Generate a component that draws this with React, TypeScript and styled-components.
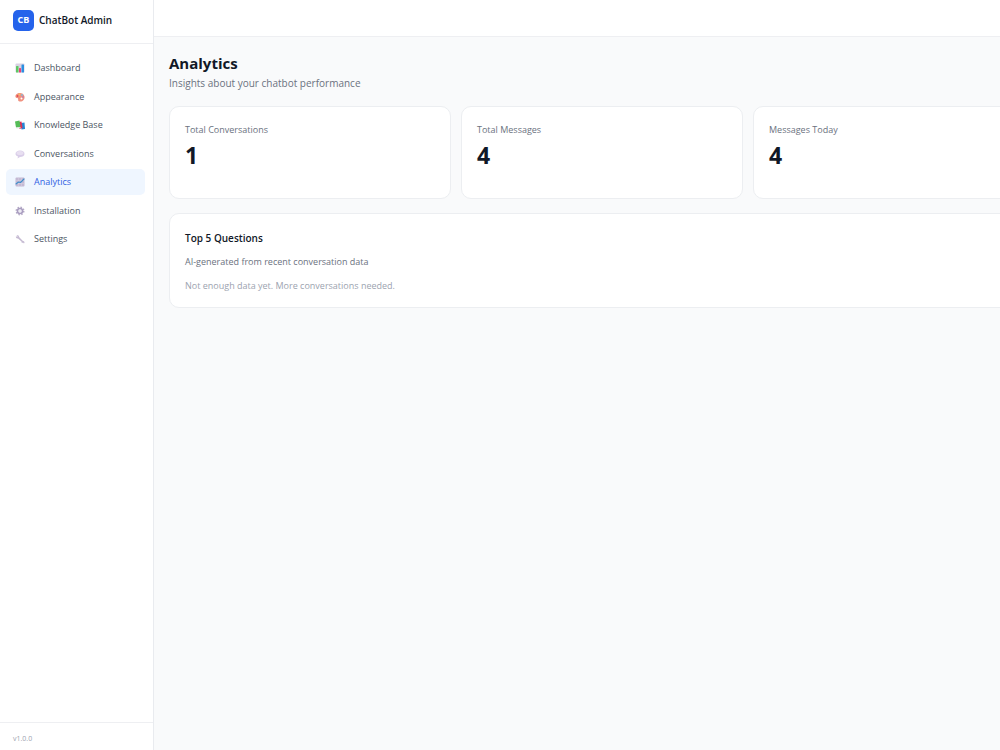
import React from "react";
import styled, { createGlobalStyle } from "styled-components";

const GlobalStyle = createGlobalStyle`
  *, *::before, *::after { box-sizing: border-box; }
  body {
    margin: 0;
    background: #f9fafb;
    color: #111827;
    font-family: "Segoe UI", "Open Sans", "Noto Sans", sans-serif;
    font-size: 9px;
    line-height: 14px;
  }
  h1, h2, p, ul, dl, dd { margin: 0; padding: 0; }
`;

const Shell = styled.div`
  display: flex;
  min-height: 100vh;
  overflow: hidden;
`;

const Sidebar = styled.aside`
  display: flex;
  flex-direction: column;
  flex: 0 0 154px;
  background: #ffffff;
  border-right: 1px solid #e9ebef;
`;

const Brand = styled.div`
  display: flex;
  align-items: center;
  gap: 5px;
  height: 44px;
  padding: 0 13px 3px;
  border-bottom: 1px solid #eeeff2;
`;

const BrandMark = styled.span`
  display: grid;
  place-items: center;
  width: 21px;
  height: 21px;
  border-radius: 5px;
  background: #2563eb;
  color: #ffffff;
  font-size: 9px;
  font-weight: 700;
`;

const BrandName = styled.span`
  font-size: 10px;
  line-height: 16px;
  font-weight: 600;
  color: #111827;
`;

const Nav = styled.nav`
  flex: 1;
  padding: 11px 8px 0 6px;
`;

const NavList = styled.ul`
  display: flex;
  flex-direction: column;
  justify-content: space-between;
  height: 197px;
  list-style: none;
`;

const NavLink = styled.a<{ $active: boolean }>`
  display: flex;
  align-items: center;
  gap: 9px;
  height: 26px;
  padding: 0 9px;
  border-radius: 5px;
  background: ${(p) => (p.$active ? "#eff6ff" : "transparent")};
  color: ${(p) => (p.$active ? "#2f5fe3" : "#4b5563")};
  text-decoration: none;
`;

const Icon = styled.svg`
  flex: none;
  width: 10px;
  height: 10px;
`;

const Version = styled.footer`
  padding: 9px 13px 4px;
  border-top: 1px solid #eeeff2;
  color: #9ca3af;
  font-size: 7px;
`;

const Main = styled.div`
  flex: 1;
  min-width: 0;
`;

const TopBar = styled.header`
  height: 37px;
  background: #ffffff;
  border-bottom: 1px solid #eeeff2;
`;

const Content = styled.main`
  min-width: 896px;
  padding: 16px 15px;
`;

const Title = styled.h1`
  font-size: 15px;
  line-height: 20px;
  font-weight: 700;
`;

const Subtitle = styled.p`
  margin-top: 3px;
  font-size: 10px;
  color: #6b7280;
`;

const Stats = styled.dl`
  display: grid;
  grid-template-columns: repeat(3, minmax(282px, 1fr));
  gap: 10px;
  margin-top: 16px;
`;

const Card = styled.div`
  padding: 16px 15px;
  border: 1px solid #eceef1;
  border-radius: 10px;
  background: #ffffff;
`;

const StatCard = styled(Card)`
  min-height: 93px;
`;

const StatLabel = styled.dt`
  color: #6b7280;
`;

const StatValue = styled.dd`
  margin-top: 4px;
  font-size: 23px;
  line-height: 28px;
  font-weight: 700;
`;

const Panel = styled(Card).attrs({ as: "section" })`
  margin-top: 14px;
  padding-top: 17px;
  padding-bottom: 14px;
`;

const PanelTitle = styled.h2`
  font-size: 10px;
  line-height: 14px;
  font-weight: 600;
  color: #111827;
`;

const PanelText = styled.p<{ $muted?: boolean }>`
  margin-top: 10px;
  color: ${(p) => (p.$muted ? "#9ca3af" : "#6b7280")};
`;

const BarsIcon = () => (
  <Icon viewBox="0 0 20 20" aria-hidden="true">
    <rect x="1" y="1" width="18" height="18" rx="2" fill="#d9d2e3" />
    <rect x="2" y="6" width="5" height="13" rx="1" fill="#5fc963" />
    <rect x="8" y="10" width="4" height="9" rx="1" fill="#ee3f76" />
    <rect x="13" y="3" width="5" height="16" rx="1" fill="#2d8fe0" />
  </Icon>
);

const PaletteIcon = () => (
  <Icon viewBox="0 0 20 20" aria-hidden="true">
    <path
      d="M10 2C4 2 0 6 1 10c1 3 4 1 5 3 1 3-1 5 3 6 6 1 11-4 10-10-1-5-5-7-9-7Zm3 9a2 2 0 1 1 0 4 2 2 0 0 1 0-4Z"
      fill="#f0917f"
    />
    <circle cx="5" cy="8" r="1.8" fill="#e04a4f" />
    <circle cx="9" cy="5" r="1.8" fill="#f7c45c" />
    <circle cx="14" cy="6" r="1.8" fill="#7fb9dd" />
    <circle cx="16" cy="10" r="1.6" fill="#a874c8" />
  </Icon>
);

const BooksIcon = () => (
  <Icon viewBox="0 0 20 20" aria-hidden="true">
    <path d="m12 6 7-1 1 13-7 1Z" fill="#2587d6" />
    <path d="m7 4 6-1 2 13-6 2Z" fill="#dd3159" />
    <path d="m0 3 9-2 2 13-9 1Z" fill="#55bd58" />
    <path d="m2 15 9-1v2l-8 1Z" fill="#dce5df" />
  </Icon>
);

const SpeechIcon = () => (
  <Icon viewBox="0 0 20 20" aria-hidden="true">
    <path
      d="M10 3c6 0 9 3 9 7s-4 6-9 6l-5 3 1-4c-3-1-5-3-5-5 0-4 4-7 9-7Z"
      fill="#d9cde8"
    />
    <ellipse cx="10" cy="8" rx="7" ry="4" fill="#e8dff1" />
  </Icon>
);

const TrendIcon = () => (
  <Icon viewBox="0 0 20 20" aria-hidden="true">
    <rect x="1" y="1" width="18" height="18" rx="2" fill="#c4b9d3" />
    <path d="M1 7h18M1 13h18M7 1v18M13 1v18" stroke="#d8d0e3" />
    <path
      d="m2 14 5-4 4 1 7-7"
      fill="none"
      stroke="#3c8dcb"
      strokeWidth="2.2"
      strokeLinecap="round"
      strokeLinejoin="round"
    />
  </Icon>
);

const GearIcon = () => (
  <Icon viewBox="0 0 20 20" aria-hidden="true">
    <circle cx="10" cy="10" r="7.5" fill="none" stroke="#b5abc6" strokeWidth="3" strokeDasharray="3 2.9" />
    <circle cx="10" cy="10" r="5" fill="none" stroke="#a99dc0" strokeWidth="3.2" />
    <circle cx="10" cy="10" r="2" fill="#e9e4f0" />
  </Icon>
);

const WrenchIcon = () => (
  <Icon viewBox="0 0 20 20" aria-hidden="true">
    <path
      d="M3 2 7 3l2 4 7 7c3 0 4 3 2 5l-2-2-2 1c-1-1-1-2-1-3L6 9C3 10 1 7 2 4l2 2 1-1Z"
      fill="#c5bad2"
    />
  </Icon>
);

const navItems = [
  { label: "Dashboard", Glyph: BarsIcon },
  { label: "Appearance", Glyph: PaletteIcon },
  { label: "Knowledge Base", Glyph: BooksIcon },
  { label: "Conversations", Glyph: SpeechIcon },
  { label: "Analytics", Glyph: TrendIcon },
  { label: "Installation", Glyph: GearIcon },
  { label: "Settings", Glyph: WrenchIcon },
];

const stats = [
  { label: "Total Conversations", value: 1 },
  { label: "Total Messages", value: 4 },
  { label: "Messages Today", value: 4 },
];

export default function App() {
  const current = "Analytics";
  return (
    <>
      <GlobalStyle />
      <Shell>
        <Sidebar>
          <Brand>
            <BrandMark>CB</BrandMark>
            <BrandName>ChatBot Admin</BrandName>
          </Brand>
          <Nav>
            <NavList>
              {navItems.map(({ label, Glyph }) => (
                <li key={label}>
                  <NavLink
                    href={"#" + label.toLowerCase().replace(" ", "-")}
                    $active={label === current}
                    aria-current={label === current ? "page" : undefined}
                  >
                    <Glyph />
                    {label}
                  </NavLink>
                </li>
              ))}
            </NavList>
          </Nav>
          <Version>v1.0.0</Version>
        </Sidebar>
        <Main>
          <TopBar />
          <Content>
            <Title>Analytics</Title>
            <Subtitle>Insights about your chatbot performance</Subtitle>
            <Stats>
              {stats.map((s) => (
                <StatCard key={s.label}>
                  <StatLabel>{s.label}</StatLabel>
                  <StatValue>{s.value}</StatValue>
                </StatCard>
              ))}
            </Stats>
            <Panel>
              <PanelTitle>Top 5 Questions</PanelTitle>
              <PanelText>AI-generated from recent conversation data</PanelText>
              <PanelText $muted>Not enough data yet. More conversations needed.</PanelText>
            </Panel>
          </Content>
        </Main>
      </Shell>
    </>
  );
}
